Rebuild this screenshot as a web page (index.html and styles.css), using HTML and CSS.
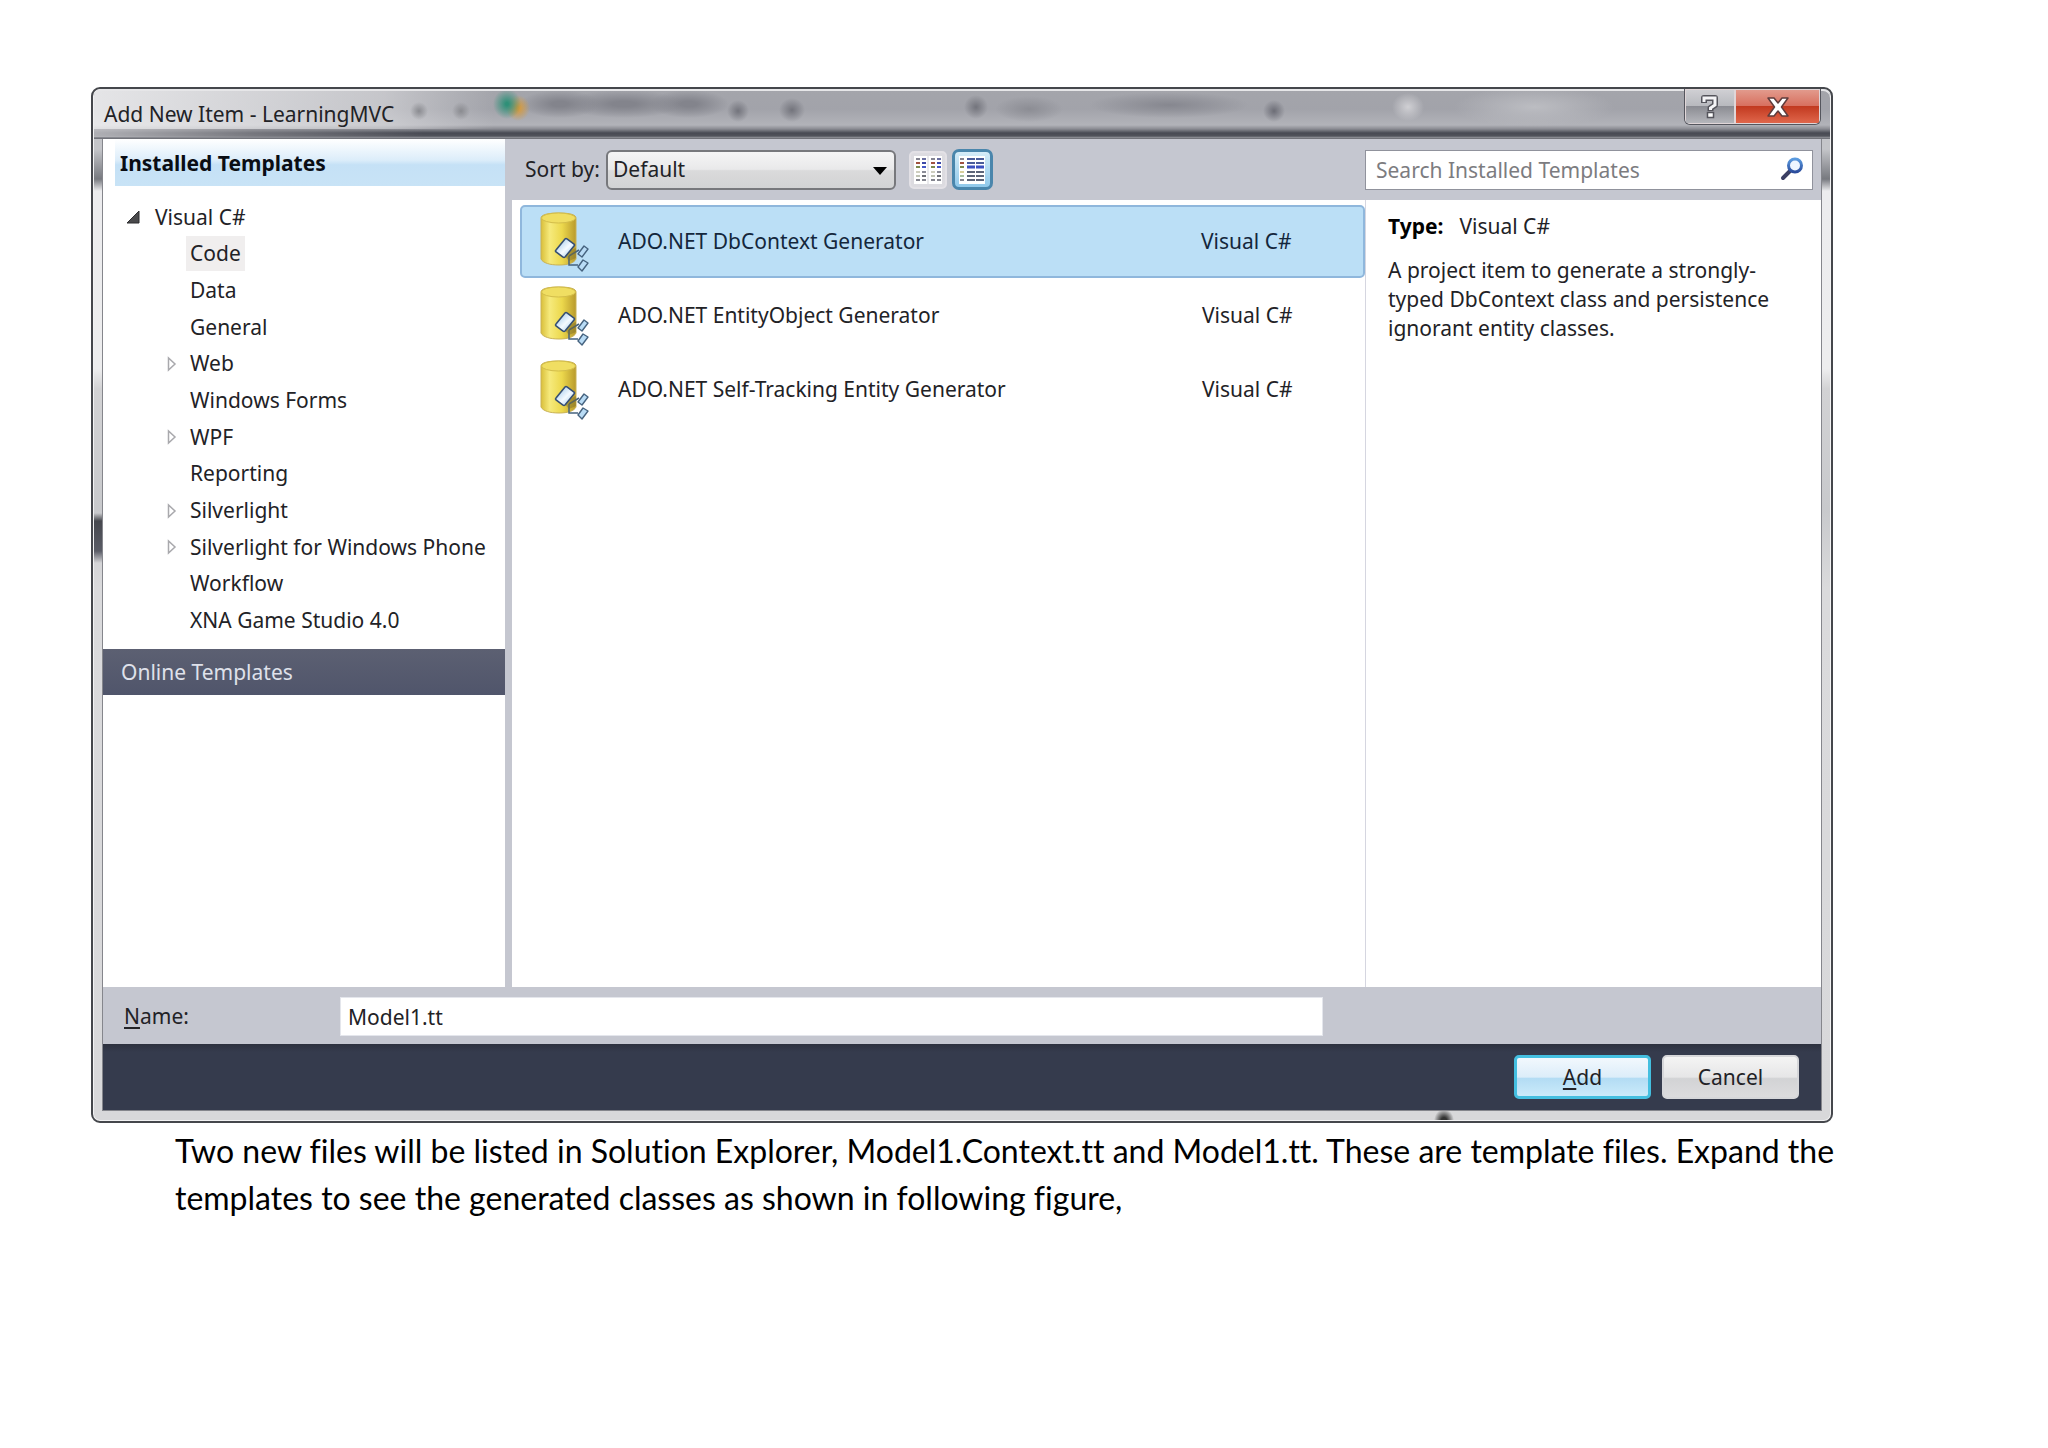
FILE: index.html
```html
<!DOCTYPE html>
<html lang="en">
<head>
<meta charset="utf-8">
<title>Add New Item - LearningMVC</title>
<link rel="stylesheet" href="styles.css">
</head>
<body>
<svg class="defs" width="0" height="0" aria-hidden="true">
  <defs>
    <linearGradient id="cyl" x1="0" x2="1" y1="0" y2="0">
      <stop offset="0" stop-color="#d9bf3a"/><stop offset=".25" stop-color="#f6ea7c"/><stop offset=".6" stop-color="#ecd84c"/><stop offset="1" stop-color="#b99a2c"/>
    </linearGradient>
    <linearGradient id="tag" x1="0" x2="1" y1="0" y2="1">
      <stop offset="0" stop-color="#8fbfe8"/><stop offset=".55" stop-color="#f4faff"/><stop offset="1" stop-color="#8fc0ea"/>
    </linearGradient>
    <linearGradient id="lens" x1="0" x2="0" y1="0" y2="1">
      <stop offset="0" stop-color="#5a9be0"/><stop offset="1" stop-color="#2b4c9c"/>
    </linearGradient>
    <symbol id="generator" viewBox="0 0 50 60">
      <path d="M2 6 C2 3 8 1 20 1 S37 3 37 6 V47 C35 51 29 53 20 53 S4 51 2 47 Z" fill="url(#cyl)" stroke="#c9b257" stroke-width="1"/>
      <ellipse cx="19.500" cy="6" rx="17" ry="5" fill="#f0de62" stroke="#d3bd4a" stroke-width="1"/>
      <path d="M30 44 L40 38 M30 44 V53 H39" fill="none" stroke="#46637f" stroke-width="1.500"/>
      <path d="M24 42 L37 36 L37 46 L30 49 Z" fill="#7d6d25" opacity=".45"/>
      <path d="M17 38 L26 27 Q27 26 28 27 L35 32 Q36 33 35 34 L26 45 Q25 46 24 45 L17 40 Q16 39 17 38 Z" fill="url(#tag)" stroke="#364f72" stroke-width="1.600"/>
      <path d="M39 42 L45 34 L49 37 L43 45 Z" fill="#b9dcf6" stroke="#46637f" stroke-width="1.400" stroke-linejoin="round"/>
      <path d="M39 55 L44 48 L49 51 L43 59 Z" fill="#b9dcf6" stroke="#46637f" stroke-width="1.400" stroke-linejoin="round"/>
    </symbol>
    <symbol id="branch" viewBox="0 0 10 16">
      <path d="M1.500 2 V14 L8 8 Z" fill="#fff" stroke="#a9a9ad" stroke-width="1.500"/>
    </symbol>
  </defs>
</svg>
<main class="page">
  <section class="window" aria-labelledby="window-title">
    <header class="titlebar">
      <h1 id="window-title">Add New Item - LearningMVC</h1>
      <div class="caption-buttons">
        <button type="button" class="help" aria-label="Help">
          <svg width="20" height="24" viewBox="0 0 20 24" fill="none" aria-hidden="true">
            <path d="M4 8 V3 H15 V10 L10.500 13 V16" stroke="#55555c" stroke-width="6" stroke-linejoin="round"/>
            <path d="M7.500 17.500 H13.500 V22.500 H7.500 Z" fill="#fff" stroke="#55555c" stroke-width="1.500"/>
            <path d="M4 7 V3 H15 V10 L10.500 13 V15" stroke="#f4f4f6" stroke-width="3"/>
          </svg>
        </button>
        <button type="button" class="close" aria-label="Close">
          <svg width="24" height="22" viewBox="0 0 24 22" aria-hidden="true">
            <path d="M2 2 H8 L12 7 L16 2 H22 L15.500 11 L22 20 H16 L12 15 L8 20 H2 L8.500 11 Z" fill="#fff" stroke="#5f3c3c" stroke-width="1.500" stroke-linejoin="round"/>
          </svg>
        </button>
      </div>
    </header>

    <form class="client">
      <div class="body">
        <nav class="sidebar" aria-label="Templates">
          <h2 class="installed">Installed Templates</h2>
          <ul class="tree">
            <li class="root"><svg class="open" width="14" height="14" viewBox="0 0 14 14" aria-hidden="true"><path d="M13 1 V13 H1 Z" fill="#4a4a4c" stroke="#2d2d2f"/></svg><span>Visual C#</span></li>
            <li class="current"><i></i><span>Code</span></li>
            <li><i></i><span>Data</span></li>
            <li><i></i><span>General</span></li>
            <li><i><svg width="10" height="16" aria-hidden="true"><use href="#branch"/></svg></i><span>Web</span></li>
            <li><i></i><span>Windows Forms</span></li>
            <li><i><svg width="10" height="16" aria-hidden="true"><use href="#branch"/></svg></i><span>WPF</span></li>
            <li><i></i><span>Reporting</span></li>
            <li><i><svg width="10" height="16" aria-hidden="true"><use href="#branch"/></svg></i><span>Silverlight</span></li>
            <li><i><svg width="10" height="16" aria-hidden="true"><use href="#branch"/></svg></i><span>Silverlight for Windows Phone</span></li>
            <li><i></i><span>Workflow</span></li>
            <li><i></i><span>XNA Game Studio 4.0</span></li>
          </ul>
          <h2 class="online">Online Templates</h2>
        </nav>

        <div class="content">
          <div class="toolbar">
            <label for="sort">Sort by:</label>
            <div class="select">
              <select id="sort"><option>Default</option></select>
              <svg width="14" height="8" viewBox="0 0 14 8" aria-hidden="true"><path d="M0 0 H14 L7 8 Z" fill="#000"/></svg>
            </div>
            <button type="button" class="view" aria-label="Small icons">
              <svg width="30" height="30" viewBox="0 0 30 30" aria-hidden="true">
                <path d="M1 1 H29 V29 H1 Z" fill="#fff"/><path d="M15 1 V29" stroke="#d5d5db"/>
                <g stroke-width="2" fill="none">
                  <path d="M3 4 H7 M18 4 H22" stroke="#858592"/><path d="M9 4 H13 M24 4 H28" stroke="#6b70a0"/>
                  <path d="M3 8 H7 M18 8 H22" stroke="#a0523f"/><path d="M9 8 H13 M24 8 H28" stroke="#3c48a8"/>
                  <path d="M3 12 H7 M18 12 H22" stroke="#7b8b50"/><path d="M9 12 H13 M24 12 H28" stroke="#4557c4"/>
                  <path d="M3 17 H7 M18 17 H22" stroke="#cfcfc0"/><path d="M9 17 H13 M24 17 H28" stroke="#8b8c98"/>
                  <path d="M3 21 H7 M18 21 H22" stroke="#bfc3b4"/><path d="M9 21 H13 M24 21 H28" stroke="#6f7078"/>
                  <path d="M3 25 H7 M9 25 H13 M18 25 H22 M24 25 H28" stroke="#84858f"/>
                </g>
              </svg>
            </button>
            <button type="button" class="view active" aria-label="Medium icons" aria-pressed="true">
              <svg width="30" height="30" viewBox="0 0 30 30" aria-hidden="true">
                <path d="M1 1 H27 V29 H1 Z" fill="#fff"/>
                <g stroke-width="2" fill="none">
                  <path d="M2 4 H6" stroke="#858592"/><path d="M2 8 H6" stroke="#a0523f"/><path d="M2 12 H6" stroke="#7b8b50"/>
                  <path d="M2 17 H6" stroke="#d8cf9a"/><path d="M2 21 H6" stroke="#a9c0a0"/><path d="M2 25 H6" stroke="#84858f"/>
                  <path d="M9 4 H17 M18 4 H26 M9 8 H17 M18 8 H26" stroke="#4a5c9a"/>
                  <path d="M9 12 H17 M18 12 H26" stroke="#3c50c0" stroke-width="3"/>
                  <path d="M9 17 H17 M18 17 H26 M9 21 H17 M18 21 H26 M9 25 H17 M18 25 H26" stroke="#5c6478"/>
                </g>
              </svg>
            </button>
            <div class="search">
              <input type="search" aria-label="Search Installed Templates" placeholder="Search Installed Templates">
              <svg width="24" height="24" viewBox="0 0 24 24" fill="none" aria-hidden="true">
                <path d="M10 14 L3 21" stroke="#3b3f63" stroke-width="4" stroke-linecap="round"/>
                <circle cx="15" cy="8.500" r="6.500" fill="#eef6ff" stroke="url(#lens)" stroke-width="3"/>
              </svg>
            </div>
          </div>
          <div class="panes">
            <ul class="templates">
              <li class="selected"><svg width="50" height="60" aria-hidden="true"><use href="#generator"/></svg><span class="title">ADO.NET DbContext Generator</span><span class="lang">Visual C#</span></li>
              <li><svg width="50" height="60" aria-hidden="true"><use href="#generator"/></svg><span class="title">ADO.NET EntityObject Generator</span><span class="lang">Visual C#</span></li>
              <li><svg width="50" height="60" aria-hidden="true"><use href="#generator"/></svg><span class="title">ADO.NET Self-Tracking Entity Generator</span><span class="lang">Visual C#</span></li>
            </ul>
            <aside class="details">
              <p class="type"><strong>Type:</strong><span>Visual C#</span></p>
              <p>A project item to generate a strongly-typed DbContext class and persistence ignorant entity classes.</p>
            </aside>
          </div>
        </div>
      </div>

      <div class="name-row">
        <label for="name"><u>N</u>ame:</label>
        <input id="name" type="text" value="Model1.tt">
      </div>
      <footer class="actions">
        <button type="button" class="add"><u>A</u>dd</button>
        <button type="button" class="cancel">Cancel</button>
      </footer>
    </form>
  </section>

  <p class="caption">Two new files will be listed in Solution Explorer, Model1.Context.tt and Model1.tt. These are template files. Expand the templates to see the generated classes as shown in following figure,</p>
</main>
</body>
</html>
```
FILE: styles.css
```css
* { box-sizing: border-box; }

body {
  margin: 0;
  background: #fff;
  color: #222226;
  font: 21px/29px "Noto Sans", "Open Sans", sans-serif;
}

h1, h2, p, ul { margin: 0; padding: 0; font-size: inherit; font-weight: normal; }
ul { list-style: none; }
button, input, select { font: inherit; color: inherit; }
.defs { display: block; }

.page { padding: 87px 215px 40px 91px; }

/* Glass window frame */
.window {
  padding: 0 10px 10px;
  border: 2px solid #45474c;
  border-radius: 9px;
  box-shadow: inset 0 0 0 1px #f2f2f3;
  background:
    radial-gradient(ellipse 10px 12px at 1351px 100%, #333 30%, transparent) no-repeat,
    linear-gradient(transparent, #46484e 8px, #5a5c66 38px, transparent) 0 424px / 10px 50px no-repeat,
    linear-gradient(#c4c5c9 60px, #77797f 90px, #ececee 102px, #ededee 280px, #d2d2d4 300px, #c8c9cc 420px, #dadadc 500px, #d8d8da);
}

.titlebar {
  display: flex;
  justify-content: space-between;
  align-items: flex-start;
  height: 50px;
  margin: 0 -9px;
  padding: 0 9px;
  border-radius: 7px 7px 0 0;
  box-shadow: inset 0 2px 0 #e6e6e8;
  background:
    radial-gradient(ellipse 14px 15px at 413px 15px, #2f9078 10%, transparent),
    radial-gradient(ellipse 12px 13px at 424px 19px, #d69a3c 10%, transparent),
    radial-gradient(ellipse 40px 14px at 466px 15px, #83848c 20%, transparent),
    radial-gradient(ellipse 60px 14px at 530px 15px, #83848c 20%, transparent),
    radial-gradient(ellipse 40px 14px at 595px 15px, #83848c 20%, transparent),
    radial-gradient(ellipse 9px 9px at 325px 22px, #8a8b90, transparent),
    radial-gradient(ellipse 9px 9px at 367px 22px, #8a8b90, transparent),
    radial-gradient(ellipse 11px 11px at 644px 22px, #73747c, transparent),
    radial-gradient(ellipse 13px 12px at 698px 21px, #73747c, transparent),
    radial-gradient(ellipse 12px 12px at 882px 18px, #73747c, transparent),
    radial-gradient(ellipse 34px 13px at 935px 20px, #8c8d94, transparent),
    radial-gradient(ellipse 80px 13px at 1075px 16px, #86878f, transparent),
    radial-gradient(ellipse 11px 11px at 1180px 22px, #6c6d76, transparent),
    radial-gradient(ellipse 16px 14px at 1314px 18px, #d0d0d4, transparent),
    radial-gradient(ellipse 80px 20px at 1440px 18px, #bcbdc2, transparent),
    linear-gradient(90deg, rgba(245, 245, 246, .8), rgba(220, 220, 223, .6) 290px, transparent 400px) 0 0 / 100% 40px no-repeat,
    linear-gradient(90deg, rgba(200, 200, 204, .8), rgba(160, 160, 165, .5) 160px, transparent 330px) 0 40px / 100% 8px no-repeat,
    linear-gradient(#a4a5ab, #a2a3aa 20px, #b2b3b9 36px, #8a8b92 40px, #484a53 44px, #51535b 47px, #9a9ba1 49px, #4a4c54 50px);
}
.titlebar h1 { padding: 11px 0 0 1px; }

.caption-buttons {
  display: flex;
  border: 1px solid #55565e;
  border-top: 0;
  border-radius: 0 0 6px 6px;
  overflow: hidden;
}
.caption-buttons button {
  display: flex;
  justify-content: center;
  align-items: center;
  height: 35px;
  padding: 0;
  border: 1px solid #e0d6d8;
}
.help { width: 50px; background: linear-gradient(#cfcfd3, #b8b9be 48%, #8b8c93 50%, #b5b6bb); }
.close { width: 85px; background: linear-gradient(#e29a8c, #d8705f 48%, #c23a20 50%, #e0664b); }

/* Dialog contents */
.client { border: 1px solid #85868c; border-top: 0; background: #c5c7d0; margin: 0 -1px; }
.body { display: flex; gap: 7px; min-height: 848px; }

.sidebar { flex: none; width: 402px; background: #fff; }
.installed {
  height: 47px;
  margin-left: 12px;
  padding: 10px 5px 8px;
  background: linear-gradient(#fff, #dcedfa 45%, #c5e1f6 55%, #c8e3f6);
  color: #0a0d14;
  font-weight: bold;
}
.tree {
  display: grid;
  min-height: 440px;
  margin: 13px 0 10px;
}
.tree li { display: flex; align-items: center; padding-left: 64px; }
.tree li.root { padding-left: 23px; gap: 15px; }
.tree i { flex: none; width: 19px; height: 16px; line-height: 0; }
.tree span { padding: 3px 4px; }
.tree .root span { padding: 3px 0; }
.tree .current span { background: #f0eeee; }
.online {
  height: 46px;
  padding: 9px 18px;
  background: linear-gradient(#5c6072, #50556b);
  color: #dfe1ea;
}

.content { flex: 1; display: flex; flex-direction: column; min-width: 0; }
.toolbar { display: flex; align-items: center; height: 61px; padding: 0 8px 0 13px; }
.toolbar label { width: 81px; }
.select { position: relative; width: 290px; margin-right: 13px; }
.select select {
  display: block;
  width: 100%;
  height: 40px;
  padding: 0 5px;
  border: 2px solid #77787c;
  border-radius: 6px;
  appearance: none;
  background: linear-gradient(#f5f5f5, #e9e9ea 48%, #dadadb 52%, #d2d3d4);
}
.select svg { position: absolute; right: 9px; top: 17px; pointer-events: none; }
.view {
  display: grid;
  place-items: center;
  width: 38px;
  height: 38px;
  margin-right: 5px;
  padding: 0;
  border: 2px solid #e3e1e6;
  border-radius: 5px;
  background: #dcdbe0;
}
.view.active {
  width: 41px;
  height: 41px;
  border: 3px solid #4a86ac;
  border-radius: 7px;
  background: linear-gradient(#d5ecf8, #8fc8ea);
}
.search { position: relative; width: 448px; margin-left: auto; }
.search input {
  display: block;
  width: 100%;
  height: 40px;
  padding: 0 40px 0 10px;
  border: 1px solid #90929c;
  border-radius: 0;
  appearance: none;
  background: #fff;
}
.search input::placeholder { color: #7c7c80; opacity: 1; }
.search svg { position: absolute; right: 9px; top: 7px; }

.panes { flex: 1; display: flex; background: #fff; }
.templates { flex: 1; padding: 5px 0 0 8px; }
.templates li {
  display: flex;
  align-items: center;
  height: 73px;
  margin-bottom: 1px;
  padding-left: 18px;
  border: 1px solid transparent;
  border-radius: 5px;
}
.templates .selected { background: #bbdff6; border: 2px solid #8fb7dc; padding-left: 17px; color: #14273c; }
.templates svg { flex: none; }
.title { flex: 1; padding-left: 29px; }
.lang { width: 162px; }
.details { flex: none; width: 456px; padding: 12px 50px 0 22px; border-left: 1px solid #d5d6e0; }
.details strong { margin-right: 16px; color: #000; }
.type { margin-bottom: 15px; }

.name-row {
  display: flex;
  align-items: center;
  height: 57px;
  padding: 2px 498px 0 21px;
}
.name-row label { flex: none; width: 216px; }
.name-row input {
  flex: 1;
  height: 39px;
  padding: 0 7px;
  border: 1px solid #e4e6ec;
  background: #fff;
}

.actions {
  display: flex;
  justify-content: flex-end;
  gap: 11px;
  height: 66px;
  padding: 11px 22px;
  background: linear-gradient(#2d313e, #353b4d 8px);
}
.actions button {
  width: 137px;
  height: 44px;
  padding: 0;
  border: 2px solid #d6d7da;
  border-radius: 5px;
  background: linear-gradient(#f4f4f4, #e6e6e7 50%, #d2d3d5 54%, #dcdcde);
}
.actions .add {
  border: 3px solid #44bfe0;
  background: linear-gradient(#f2f8fd, #dcedf9 50%, #b3dcf4 54%, #cbebfa);
}
u { text-underline-offset: 3px; }

/* Document text below the figure */
.caption {
  margin: 4px -40px 0 0;
  padding-left: 84px;
  color: #000;
  font: 32px/47px Lato, "Open Sans", sans-serif;
  font-variant-ligatures: none;
}
```
